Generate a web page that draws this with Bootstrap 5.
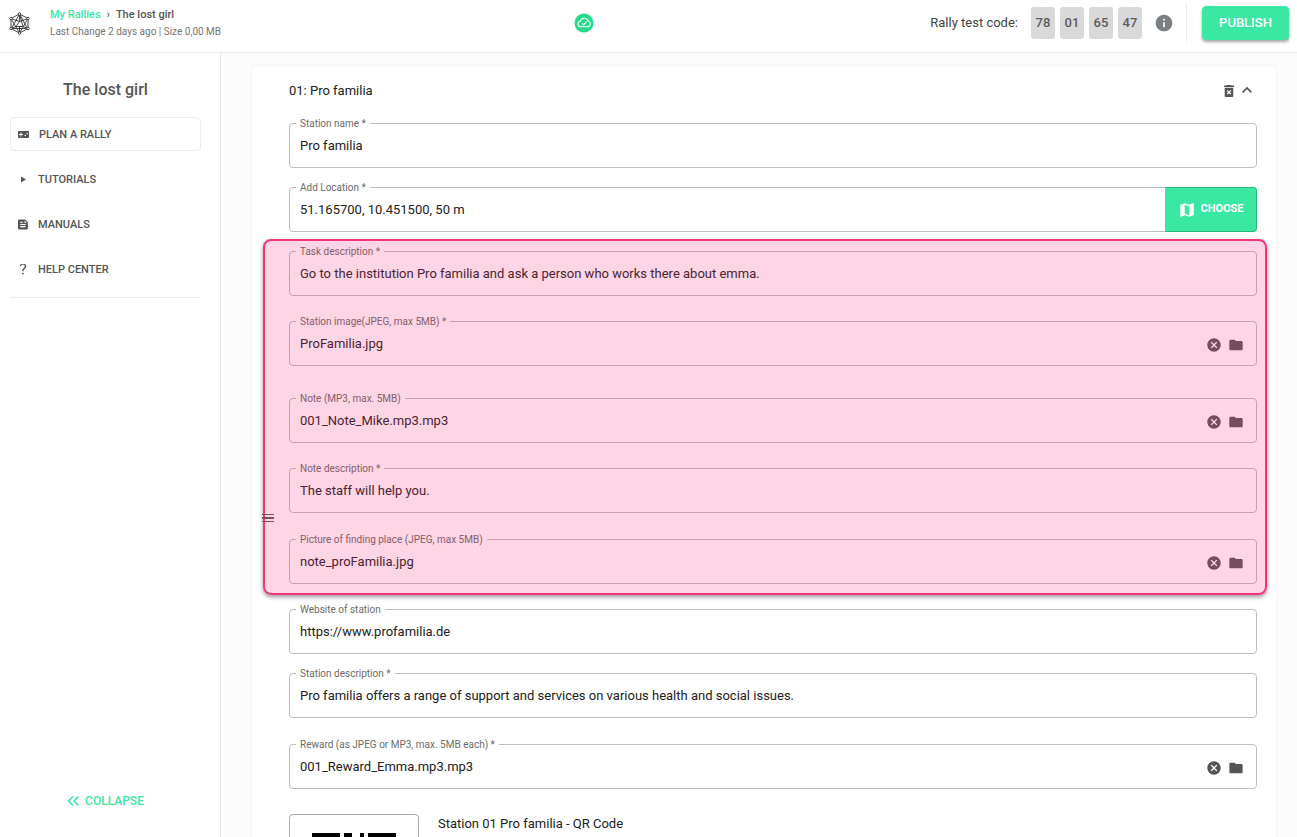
<!DOCTYPE html>
<html lang="en">
<head>
<meta charset="utf-8">
<meta name="viewport" content="width=device-width, initial-scale=1">
<title>The lost girl – Rally editor</title>
<link rel="stylesheet" href="https://cdn.jsdelivr.net/npm/bootstrap@5.3.0/dist/css/bootstrap.min.css">
<style>
  :root { --mint: #3ae8a4; --ink: #212121; --soft: #555; --line: #ebebeb; }
  body { font-family: Roboto, "Liberation Sans", sans-serif; font-size: 13px; line-height: 16px; color: var(--ink); }
  a { text-decoration: none; }
  svg { display: block; fill: currentColor; flex: none; }
  .icon-btn { border: 0; background: none; padding: 0; color: var(--soft); }

  .topbar { height: 53px; border-bottom: 1px solid var(--line); padding: 0 8px 6px 9px; }
  .crumbs { font-size: 11px; font-weight: 500; margin-bottom: 1px; }
  .crumbs .crumb-link { color: var(--mint); }
  .crumbs .crumb-now { color: var(--soft); }
  .crumbs .crumb-sep { padding: 0 6px; }
  .meta { font-size: 10px; color: #757575; }
  .code-label { margin-right: 13px; font-weight: 400; color: #444; }
  .codes { gap: 5px; }
  .code-box { width: 24px; height: 32px; border-radius: 3px; background: #d9d9d9; color: #5c5c5c; font-weight: 500; }
  .icon-btn.info-btn { color: #7b7f83; margin: 0 12px; }
  .top-rule { width: 1px; height: 38px; background: var(--line); margin-right: 15px; }
  .btn-mint { --bs-btn-color: #fff; --bs-btn-bg: var(--mint); --bs-btn-border-color: var(--mint); --bs-btn-hover-color: #fff; --bs-btn-hover-bg: #2fd794; --bs-btn-hover-border-color: #2fd794; --bs-btn-font-weight: 500; }
  .btn-publish { width: 87px; height: 34px; padding: 0; font-size: 13px; border-radius: 4px; box-shadow: 0 2px 3px rgba(0,0,0,.35); }

  .side { width: 221px; border-right: 1px solid var(--line); padding: 28px 19px 28px 10px; }
  .side-title { font-size: 16px; line-height: 18px; font-weight: 500; color: var(--soft); margin: 0 0 18px; }
  .side-nav { gap: 11px; padding-bottom: 11px; border-bottom: 1px solid var(--line); }
  .side-nav .nav-link { height: 34px; padding: 2px 7px 0; border: 1px solid transparent; border-radius: 4px; color: var(--soft); font-size: 11px; font-weight: 500; gap: 9px; }
  .side-nav .nav-link.active { border-color: var(--line); }
  .collapse-btn.icon-btn { color: var(--mint); font-size: 12px; font-weight: 500; gap: 5px; }

  .work { background: #fcfcfc; padding: 13px 21px 0 31px; overflow: auto; scrollbar-width: none; }
  .station { background: #fff; border-radius: 4px; box-shadow: 0 0 2px rgba(0,0,0,.12); padding: 16px 19px 40px 37px; }
  .station-head { margin-bottom: 23px; padding-right: 5px; }
  .station-head h2 { font-size: 13px; line-height: 18px; margin: 0; font-weight: 400; }

  .field { position: relative; height: 45px; border: 1px solid #bdbdbd; border-radius: 4px; }
  .field label { position: absolute; top: -6px; left: 6px; padding: 0 4px; background: #fff; font-size: 10px; line-height: 12px; color: #6b6b6b; }
  .field input { flex: 1; min-width: 0; border: 0; outline: 0; background: transparent; padding: 0 10px; height: 43px; color: var(--ink); }
  .field .tools { gap: 6px; padding-right: 12px; padding-top: 2px; }
  .gap-s { margin-bottom: 19px; }
  .gap-m { margin-bottom: 25px; }
  .gap-n { margin-bottom: 26px; }
  .gap-l { margin-bottom: 32px; }
  .btn-choose { width: 92px; margin: -1px; padding: 0; gap: 4px; font-size: 11px; --bs-btn-font-weight: 700; --bs-btn-border-color: #2bb581; border-left-color: var(--mint); border-radius: 0 4px 4px 0; }

  .marked { position: relative; }
  .marked::after { content: ""; position: absolute; inset: -12px -10px -11px -26px; border: 2px solid #f2357b; border-radius: 8px; background: rgba(247,45,120,.2); box-shadow: 0 2px 4px rgba(0,0,0,.4); pointer-events: none; }
  .grip { position: absolute; left: -27px; bottom: 62px; z-index: 1; color: #7d4f60; }

  .qr-frame { width: 130px; border: 1px solid #a9a9a9; border-radius: 4px; padding: 18px 22px 22px; }
  .qr-caption { margin: 2px 0 0 19px; }
</style>
</head>
<body>
<svg width="0" height="0" class="position-absolute" aria-hidden="true">
  <symbol id="i-clear" viewBox="0 0 24 24"><path d="M12 2C6.470 2 2 6.470 2 12s4.470 10 10 10 10-4.470 10-10S17.530 2 12 2zm5 13.590L15.590 17 12 13.410 8.410 17 7 15.590 10.590 12 7 8.410 8.410 7 12 10.590 15.590 7 17 8.410 13.410 12z"/></symbol>
  <symbol id="i-folder" viewBox="0 0 24 24"><path d="M10 4H4c-1.100 0-2 .9-2 2v12c0 1.100.9 2 2 2h16c1.100 0 2-.9 2-2V8c0-1.100-.9-2-2-2h-8z"/></symbol>
</svg>

<div class="vh-100 d-flex flex-column">
  <header class="topbar d-flex flex-shrink-0 align-items-center justify-content-between">
    <div class="d-flex align-items-center">
      <svg width="21" height="23" viewBox="0 0 42 46" fill="none" stroke="#333" stroke-width="1.800" style="fill:none" role="img" aria-label="Home">
        <path d="M21 4 38 13V33L21 42 4 33V13zM21 4 5 33H37zM4 13 21 42 38 13M4 13 21 19 38 13M21 4V19L14 29H28zM14 29 4 33M28 29 38 33M21 29V42"/>
        <g fill="#fff"><circle cx="21" cy="4" r="2.500"/><circle cx="38" cy="13" r="2.500"/><circle cx="38" cy="33" r="2.500"/><circle cx="21" cy="42" r="2.500"/><circle cx="4" cy="33" r="2.500"/><circle cx="4" cy="13" r="2.500"/></g>
      </svg>
      <div class="ms-3 ps-1">
        <nav class="crumbs d-flex" aria-label="Breadcrumb"><a href="#" class="crumb-link">My Rallies</a><span class="crumb-sep crumb-now">›</span><span class="crumb-now">The lost girl</span></nav>
        <div class="meta">Last Change 2 days ago | Size 0,00 MB</div>
      </div>
    </div>
    <svg class="ms-3" width="20" height="20" viewBox="0 0 20 20" role="img" aria-label="Saved"><circle cx="10" cy="10" r="9.500" fill="#25d98a"/><path d="M6.500 13.700a2.800 2.800 0 0 1-.4-5.500 4.200 4.200 0 0 1 8-.2 2.900 2.900 0 0 1-.4 5.700zM8 10.300l1.600 1.600 3-3.200" fill="none" stroke="#fff" stroke-width="1.100"/></svg>
    <div class="d-flex align-items-center">
      <span class="code-label">Rally test code:</span>
      <div class="codes d-flex">
        <span class="code-box d-flex align-items-center justify-content-center">78</span>
        <span class="code-box d-flex align-items-center justify-content-center">01</span>
        <span class="code-box d-flex align-items-center justify-content-center">65</span>
        <span class="code-box d-flex align-items-center justify-content-center">47</span>
      </div>
      <button class="icon-btn info-btn" aria-label="Info"><svg width="20" height="20" viewBox="0 0 24 24"><path d="M12 2C6.480 2 2 6.480 2 12s4.480 10 10 10 10-4.480 10-10S17.520 2 12 2zm1 15h-2v-6h2v6zm0-8h-2V7h2v2z"/></svg></button>
      <span class="top-rule"></span>
      <button class="btn btn-mint btn-publish">PUBLISH</button>
    </div>
  </header>

  <div class="d-flex flex-grow-1 overflow-hidden">
    <aside class="side d-flex flex-column flex-shrink-0">
      <h1 class="side-title text-center">The lost girl</h1>
      <nav class="side-nav nav flex-column">
        <a href="#" class="nav-link active d-flex align-items-center"><svg width="12" height="12" viewBox="1 1 24 24"><path fill-rule="evenodd" d="M21 5H3a2 2 0 0 0-2 2v10a2 2 0 0 0 2 2h18a2 2 0 0 0 2-2V7a2 2 0 0 0-2-2zM11 13H8v3H6v-3H3v-2h3V8h2v3h3zm4.500 2.500a1.500 1.500 0 1 1 0-3 1.500 1.500 0 0 1 0 3zm4-3.500a1.500 1.500 0 1 1 0-3 1.500 1.500 0 0 1 0 3z"/></svg>PLAN A RALLY</a>
        <a href="#" class="nav-link d-flex align-items-center"><svg width="11" height="12" viewBox="0 0 11 12"><path d="M3 2.500v6l5-3z"/></svg>TUTORIALS</a>
        <a href="#" class="nav-link d-flex align-items-center"><svg width="11" height="12" viewBox="3 3 20 20"><path fill-rule="evenodd" d="M16 3H5a2 2 0 0 0-2 2v14a2 2 0 0 0 2 2h14a2 2 0 0 0 2-2V8zM7 7h5v2H7zm10 10H7v-2h10zm0-4H7v-2h10zm-2-4V5l4 4z"/></svg>MANUALS</a>
        <a href="#" class="nav-link d-flex align-items-center"><svg width="11" height="12" viewBox="5 4 16 20"><path d="M11.400 12.850c.77-1.390 2.350-2.310 3.210-3.540.91-1.290.3-4.300-2.580-4.300-2.090 0-2.920 1.480-3.170 2.540L6.840 6.960C7.450 4.630 9.180 3 11.990 3c2.350 0 3.960 1.070 4.780 2.410.7 1.150 1.110 3.300.03 4.900-1.200 1.770-2.550 2.510-3.170 3.650-.25.460-.35.760-.35 2.040h-2.290c-.01-.78-.13-2.050.41-3.150zM13.700 20a1.600 1.600 0 1 1-3.200 0 1.600 1.600 0 0 1 3.200 0z"/></svg>HELP CENTER</a>
      </nav>
      <button class="icon-btn collapse-btn d-flex align-items-center align-self-center mt-auto"><svg width="13" height="12" viewBox="0 0 13 12" style="fill:none"><path d="M6 1.500 1.500 6 6 10.500M11.500 1.500 7 6l4.500 4.500" stroke="currentColor" stroke-width="1.600"/></svg>COLLAPSE</button>
    </aside>

    <main class="work flex-grow-1">
      <section class="station">
        <div class="station-head d-flex justify-content-between align-items-center">
          <h2>01: Pro familia</h2>
          <div class="d-flex gap-2">
            <button class="icon-btn" aria-label="Delete station"><svg width="10" height="12" viewBox="0 0 10 12"><path fill-rule="evenodd" d="M3 0h4l.6.600H10V2H0V.6h2.400zM.7 2.800h8.600V11a1 1 0 0 1-1 1H1.700a1 1 0 0 1-1-1zM5 6.400 3.600 5 2.700 5.900 4.100 7.300 2.700 8.700l.9.900L5 8.200l1.400 1.400.9-.9L5.900 7.300l1.400-1.400-.9-.9z"/></svg></button>
            <button class="icon-btn" aria-label="Fold station"><svg width="10" height="11" viewBox="0 0 10 11" style="fill:none"><path d="M.7 6.300 5 2l4.300 4.300" stroke="currentColor" stroke-width="1.700"/></svg></button>
          </div>
        </div>

        <div class="field d-flex gap-s"><label for="name">Station name *</label><input id="name" value="Pro familia"></div>
        <div class="field d-flex gap-s"><label for="loc">Add Location *</label><input id="loc" value="51.165700, 10.451500, 50 m">
          <button class="btn btn-mint btn-choose d-flex align-items-center justify-content-center"><svg width="18" height="18" viewBox="0 0 24 24"><path d="M20.500 3l-.16.030L15 5.100 9 3 3.360 4.900c-.21.070-.36.250-.36.480V20.500c0 .28.220.5.500.5l.16-.03L9 18.900l6 2.100 5.640-1.900c.21-.07.360-.25.360-.48V3.500c0-.28-.22-.5-.5-.5zM15 19l-6-2.110V5l6 2.110V19z"/></svg>CHOOSE</button></div>

        <div class="marked gap-m">
          <div class="field d-flex gap-m"><label for="task">Task description *</label><input id="task" value="Go to the institution Pro familia and ask a person who works there about emma."></div>
          <div class="field d-flex gap-l"><label for="img">Station image(JPEG, max 5MB) *</label><input id="img" value="ProFamilia.jpg">
            <div class="tools d-flex align-items-center"><button class="icon-btn" aria-label="Clear"><svg width="16" height="16"><use href="#i-clear"/></svg></button><button class="icon-btn" aria-label="Browse"><svg width="16" height="16"><use href="#i-folder"/></svg></button></div></div>
          <div class="field d-flex gap-m"><label for="note">Note (MP3, max. 5MB)</label><input id="note" value="001_Note_Mike.mp3.mp3">
            <div class="tools d-flex align-items-center"><button class="icon-btn" aria-label="Clear"><svg width="16" height="16"><use href="#i-clear"/></svg></button><button class="icon-btn" aria-label="Browse"><svg width="16" height="16"><use href="#i-folder"/></svg></button></div></div>
          <div class="field d-flex gap-n"><label for="noted">Note description *</label><input id="noted" value="The staff will help you."></div>
          <div class="field d-flex"><label for="pic">Picture of finding place (JPEG, max 5MB)</label><input id="pic" value="note_proFamilia.jpg">
            <div class="tools d-flex align-items-center"><button class="icon-btn" aria-label="Clear"><svg width="16" height="16"><use href="#i-clear"/></svg></button><button class="icon-btn" aria-label="Browse"><svg width="16" height="16"><use href="#i-folder"/></svg></button></div></div>
          <svg class="grip" width="12" height="8" viewBox="0 0 12 8" role="img" aria-label="Drag station"><path d="M0 0h12v1H0zM0 3h12v2H0zM0 7h12v1H0z"/></svg>
        </div>

        <div class="field d-flex gap-s"><label for="web">Website of station</label><input id="web" value="https://www.profamilia.de"></div>
        <div class="field d-flex gap-n"><label for="desc">Station description *</label><input id="desc" value="Pro familia offers a range of support and services on various health and social issues."></div>
        <div class="field d-flex gap-m"><label for="reward">Reward (as JPEG or MP3, max. 5MB each) *</label><input id="reward" value="001_Reward_Emma.mp3.mp3">
          <div class="tools d-flex align-items-center"><button class="icon-btn" aria-label="Clear"><svg width="16" height="16"><use href="#i-clear"/></svg></button><button class="icon-btn" aria-label="Browse"><svg width="16" height="16"><use href="#i-folder"/></svg></button></div></div>

        <div class="d-flex align-items-start">
          <div class="qr-frame">
            <svg width="84" height="84" viewBox="0 0 21 21" shape-rendering="crispEdges" color="#000" role="img" aria-label="Station QR code"><path fill-rule="evenodd" d="M0 0h7v7H0zM1 1v5h5V1zM2 2h3v3H2zM14 0h7v7h-7zM15 1v5h5V1zM16 2h3v3h-3zM0 14h7v7H0zM1 15v5h5v-5zM2 16h3v3H2zM8 0h2v1H8zM12 0h1v1h-1zM9 2h2v2H9zM11 5h2v1h-2zM8 6h1v1H8zM10 6h1v2h-1zM12 6h1v1h-1zM0 9h3v1H0zM4 8h2v2H4zM8 9h4v2H8zM14 8h3v2h-3zM18 9h2v2h-2zM2 11h5v1H2zM9 12h2v3H9zM13 12h4v2h-4zM18 13h3v1h-3zM12 16h3v1h-3zM16 15h2v3h-2zM9 18h3v3H9zM14 19h4v1h-4zM19 17h2v4h-2z"/></svg>
          </div>
          <span class="qr-caption">Station 01 Pro familia - QR Code</span>
        </div>
      </section>
    </main>
  </div>
</div>
<script src="https://cdn.jsdelivr.net/npm/bootstrap@5.3.0/dist/js/bootstrap.bundle.min.js"></script>
</body>
</html>
